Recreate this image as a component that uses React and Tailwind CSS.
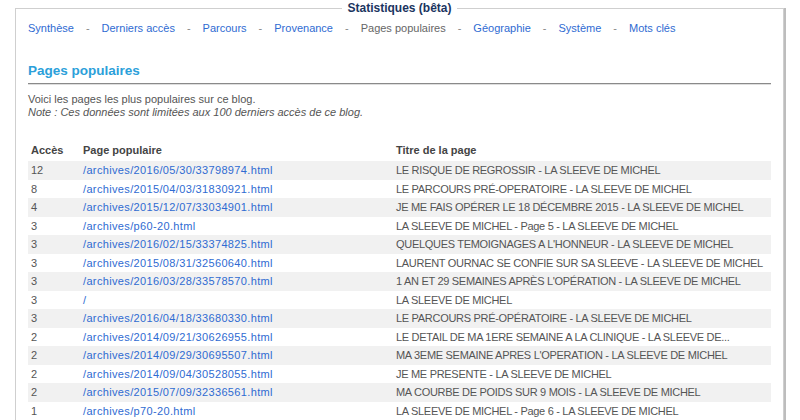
const NAV = ['Synthèse', 'Derniers accès', 'Parcours', 'Provenance', 'Pages populaires', 'Géographie', 'Système', 'Mots clés']

const ROWS = [
  ['12', '/archives/2016/05/30/33798974.html', 'LE RISQUE DE REGROSSIR - LA SLEEVE DE MICHEL'],
  ['8', '/archives/2015/04/03/31830921.html', 'LE PARCOURS PRÉ-OPERATOIRE - LA SLEEVE DE MICHEL'],
  ['4', '/archives/2015/12/07/33034901.html', 'JE ME FAIS OPÉRER LE 18 DÉCEMBRE 2015 - LA SLEEVE DE MICHEL'],
  ['3', '/archives/p60-20.html', 'LA SLEEVE DE MICHEL - Page 5 - LA SLEEVE DE MICHEL'],
  ['3', '/archives/2016/02/15/33374825.html', "QUELQUES TEMOIGNAGES A L'HONNEUR - LA SLEEVE DE MICHEL"],
  ['3', '/archives/2015/08/31/32560640.html', 'LAURENT OURNAC SE CONFIE SUR SA SLEEVE - LA SLEEVE DE MICHEL'],
  ['3', '/archives/2016/03/28/33578570.html', "1 AN ET 29 SEMAINES APRÈS L'OPÉRATION - LA SLEEVE DE MICHEL"],
  ['3', '/', 'LA SLEEVE DE MICHEL'],
  ['3', '/archives/2016/04/18/33680330.html', 'LE PARCOURS PRÉ-OPÉRATOIRE - LA SLEEVE DE MICHEL'],
  ['2', '/archives/2014/09/21/30626955.html', 'LE DETAIL DE MA 1ERE SEMAINE A LA CLINIQUE - LA SLEEVE DE...'],
  ['2', '/archives/2014/09/29/30695507.html', "MA 3EME SEMAINE APRES L'OPERATION - LA SLEEVE DE MICHEL"],
  ['2', '/archives/2014/09/04/30528055.html', 'JE ME PRESENTE - LA SLEEVE DE MICHEL'],
  ['2', '/archives/2015/07/09/32336561.html', 'MA COURBE DE POIDS SUR 9 MOIS - LA SLEEVE DE MICHEL'],
  ['1', '/archives/p70-20.html', 'LA SLEEVE DE MICHEL - Page 6 - LA SLEEVE DE MICHEL'],
]

export default function App() {
  return (
    <div className="w-[800px] h-[420px] overflow-hidden bg-white font-['Liberation_Sans',Arial,sans-serif] text-[11px] text-[#555]">
      <fieldset className="ml-[15px] mt-[2px] w-[769px] min-h-[500px] border border-[#cfcfcf] shadow-[2px_0_0_#bdbdbd] px-[12px]">
        {/* legend */}
        <legend className="mx-auto px-[5px] font-bold text-[12px] text-[#1b3560] leading-[12px]">
          Statistiques (bêta)
        </legend>

        {/* sub nav */}
        <div className="flex items-center mt-[6px] h-[16px] leading-[16px]">
          {NAV.map((n, i) => (
            <span key={n} className="flex items-center">
              {i > 0 && <span className="px-[12px] text-[#888]">-</span>}
              <span className={n === 'Pages populaires' ? 'text-[#666]' : 'text-[#2f6bd2]'}>{n}</span>
            </span>
          ))}
        </div>

        {/* heading */}
        <h2 className="mt-[26px] text-[13.5px] font-bold text-[#2ba0da] leading-[18px]">Pages populaires</h2>
        <div className="mt-[3px] border-t border-[#8a8a8a] border-b border-b-[#dedede]" />

        <p className="mt-[8px] leading-[13px]">Voici les pages les plus populaires sur ce blog.</p>
        <p className="leading-[13px] italic">Note : Ces données sont limitées aux 100 derniers accès de ce blog.</p>

        {/* table */}
        <table className="mt-[22px] w-full table-fixed border-collapse">
          <colgroup>
            <col className="w-[52px]" />
            <col className="w-[313px]" />
            <col />
          </colgroup>
          <thead>
            <tr className="h-[20px] text-left text-[#444]">
              <th className="px-[3px] pb-[1px] font-bold">Accès</th>
              <th className="px-[3px] pb-[1px] font-bold">Page populaire</th>
              <th className="px-[3px] pb-[1px] font-bold">Titre de la page</th>
            </tr>
          </thead>
          <tbody>
            {ROWS.map(([n, url, title], i) => (
              <tr key={i} className={(i % 2 === 0 ? 'bg-[#f1f1f1] ' : 'bg-white ') + 'h-[18.5px]'}>
                <td className="px-[3px] py-0 leading-[18.5px]">{n}</td>
                <td className="px-[3px] py-0 leading-[18.5px] text-[#2f6bd2] tracking-[0.35px]">{url}</td>
                <td className="px-[3px] py-0 leading-[18.5px] whitespace-nowrap tracking-[-0.3px]">{title}</td>
              </tr>
            ))}
          </tbody>
        </table>
      </fieldset>
    </div>
  )
}
